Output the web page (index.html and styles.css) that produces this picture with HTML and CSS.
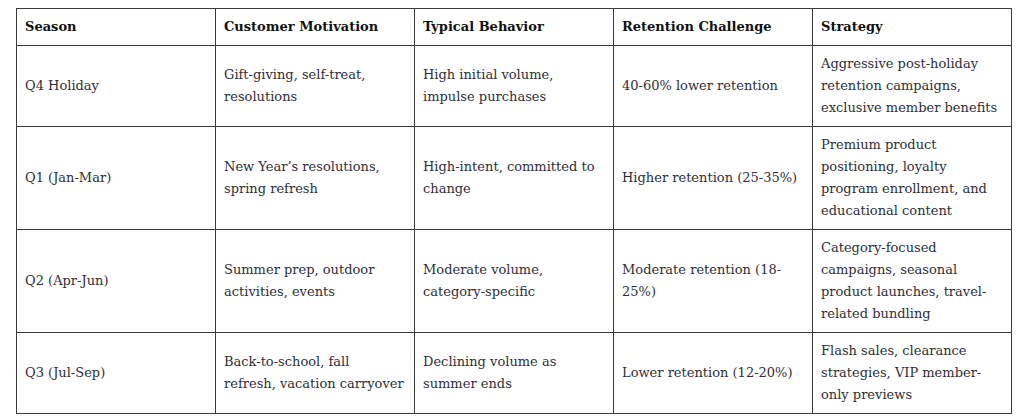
FILE: index.html
```html
<!DOCTYPE html>
<html lang="en">
<head>
<meta charset="utf-8">
<title>Seasonal Retention</title>
<link rel="stylesheet" href="styles.css">
</head>
<body>
<table class="season-table">
  <colgroup>
    <col class="col"><col class="col"><col class="col"><col class="col"><col class="col">
  </colgroup>
  <thead>
    <tr>
      <th>Season</th>
      <th>Customer Motivation</th>
      <th>Typical Behavior</th>
      <th>Retention Challenge</th>
      <th>Strategy</th>
    </tr>
  </thead>
  <tbody>
    <tr>
      <td>Q4 Holiday</td>
      <td>Gift-giving, self-treat, resolutions</td>
      <td>High initial volume, impulse purchases</td>
      <td>40-60% lower retention</td>
      <td>Aggressive post-holiday retention campaigns, exclusive member benefits</td>
    </tr>
    <tr>
      <td>Q1 (Jan-Mar)</td>
      <td>New Year’s resolutions, spring refresh</td>
      <td>High-intent, committed to change</td>
      <td>Higher retention (25-35%)</td>
      <td>Premium product positioning, loyalty program enrollment, and educational content</td>
    </tr>
    <tr>
      <td>Q2 (Apr-Jun)</td>
      <td>Summer prep, outdoor activities, events</td>
      <td>Moderate volume, category-specific</td>
      <td>Moderate retention (18-25%)</td>
      <td>Category-focused campaigns, seasonal product launches, travel-related bundling</td>
    </tr>
    <tr>
      <td>Q3 (Jul-Sep)</td>
      <td>Back-to-school, fall<br>refresh, vacation carryover</td>
      <td>Declining volume as summer ends</td>
      <td>Lower retention (12-20%)</td>
      <td>Flash sales, clearance strategies, VIP member-only previews</td>
    </tr>
  </tbody>
</table>
</body>
</html>
```
FILE: styles.css
```css
html, body {
  background: #ffffff;
}
body {
  margin: 8px 12px 0 16px;
  font-family: "DejaVu Serif", "Liberation Serif", serif;
  font-size: 13px;
  color: #2e2e3a;
}
.season-table {
  width: 996px;
  border-collapse: collapse;
  table-layout: fixed;
  border: 1px solid #3a3a3a;
}
.col {
  width: 20%;
}
.season-table th,
.season-table td {
  border: 1px solid #3a3a3a;
  padding: 7px 6px 7px 8px;
  line-height: 22px;
  text-align: left;
  vertical-align: middle;
}
.season-table th {
  font-weight: bold;
  color: #111111;
  font-size: 13px;
}
```
